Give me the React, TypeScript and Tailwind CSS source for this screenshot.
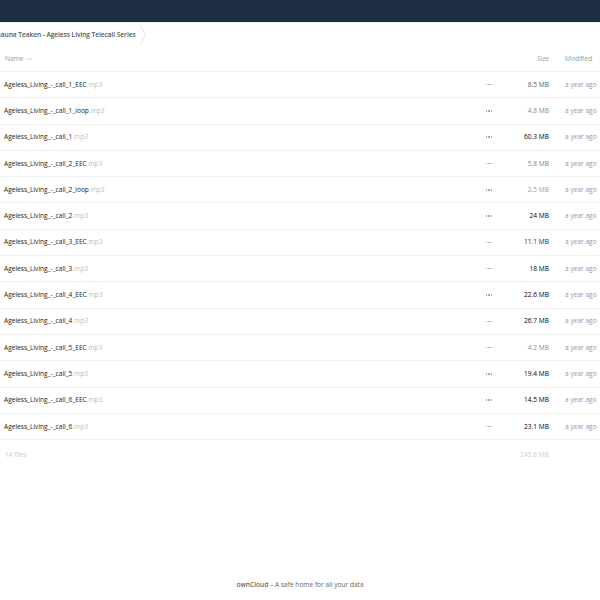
import React from "react"

type FileRow = { name: string; size: number }

const files: FileRow[] = [
  { name: "Ageless_Living_-_call_1_EEC", size: 8.5 },
  { name: "Ageless_Living_-_call_1_loop", size: 4.8 },
  { name: "Ageless_Living_-_call_1", size: 60.3 },
  { name: "Ageless_Living_-_call_2_EEC", size: 5.8 },
  { name: "Ageless_Living_-_call_2_loop", size: 2.5 },
  { name: "Ageless_Living_-_call_2", size: 24 },
  { name: "Ageless_Living_-_call_3_EEC", size: 11.1 },
  { name: "Ageless_Living_-_call_3", size: 18 },
  { name: "Ageless_Living_-_call_4_EEC", size: 22.6 },
  { name: "Ageless_Living_-_call_4", size: 26.7 },
  { name: "Ageless_Living_-_call_5_EEC", size: 4.2 },
  { name: "Ageless_Living_-_call_5", size: 19.4 },
  { name: "Ageless_Living_-_call_6_EEC", size: 14.5 },
  { name: "Ageless_Living_-_call_6", size: 23.1 },
]

// ownCloud shades the size darker the bigger the file
const sizeColor = (mb: number) => {
  const c = Math.max(0, Math.round(160 - mb * mb))
  return `rgb(${c},${c},${c})`
}

export default function App() {
  return (
    <div className="flex min-h-[600px] w-[600px] flex-col bg-white font-['Open_Sans',sans-serif] text-[6.6px] text-[#222]">
      {/* Top bar */}
      <div className="h-[22px] bg-[#1d2d44]" />

      {/* Breadcrumb */}
      <div className="flex h-[25px] items-center border-t border-[#eee]">
        <span className="-ml-[7px] whitespace-nowrap font-semibold tracking-[-0.05px] text-[#555]">Shauna Teaken - Ageless Living Telecall Series</span>
        <svg className="ml-[4px]" width="6" height="20" viewBox="0 0 6 20">
          <path d="M0.5 0.5 L5.5 10 L0.5 19.5" fill="none" stroke="#ddd" strokeWidth="0.8" />
        </svg>
      </div>

      {/* Column header */}
      <div className="flex h-[25px] items-center border-b border-[#eee] text-[#999]">
        <div className="flex flex-1 items-center pl-[5px]">
          Name
          <svg className="ml-[4px]" width="5" height="4" viewBox="0 0 5 4">
            <path d="M0.5 3 L2.5 1 L4.5 3" fill="none" stroke="#bbb" strokeWidth="0.8" />
          </svg>
        </div>
        <div className="w-[80px] pr-[1px] text-right">Size</div>
        <div className="w-[50px] pl-[15px]">Modified</div>
      </div>

      {/* Rows */}
      {files.map((f) => (
        <div key={f.name} className="flex h-[26.3px] items-center border-b border-[#eee]">
          <div className="flex flex-1 items-center pl-[4px]">
            <span className="text-[#222]">{f.name}</span>
            <span className="text-[#bbb]">.mp3</span>
          </div>
          <div className="flex w-[30px] items-center justify-center gap-[1px] pl-[8px]">
            <span className="h-[1.5px] w-[1.5px] bg-[#aaa]" />
            <span className="h-[1.5px] w-[1.5px] bg-[#aaa]" />
            <span className="h-[1.5px] w-[1.5px] bg-[#aaa]" />
          </div>
          <div className="w-[50px] pr-[1px] text-right" style={{ color: sizeColor(f.size) }}>
            {f.size} MB
          </div>
          <div className="w-[50px] pl-[15px] whitespace-nowrap text-[#999]">a year ago</div>
        </div>
      ))}

      {/* Summary */}
      <div className="flex h-[30px] items-center text-[#ccc]">
        <div className="flex-1 pl-[5px]">14 files</div>
        <div className="w-[80px] pr-[1px] text-right">245.6 MB</div>
        <div className="w-[50px]" />
      </div>

      <div className="flex-1" />

      {/* Footer */}
      <div className="flex h-[30px] items-center justify-center text-[#666]">
        <span>
          <span className="font-semibold">ownCloud</span> – A safe home for all your data
        </span>
      </div>
    </div>
  )
}
